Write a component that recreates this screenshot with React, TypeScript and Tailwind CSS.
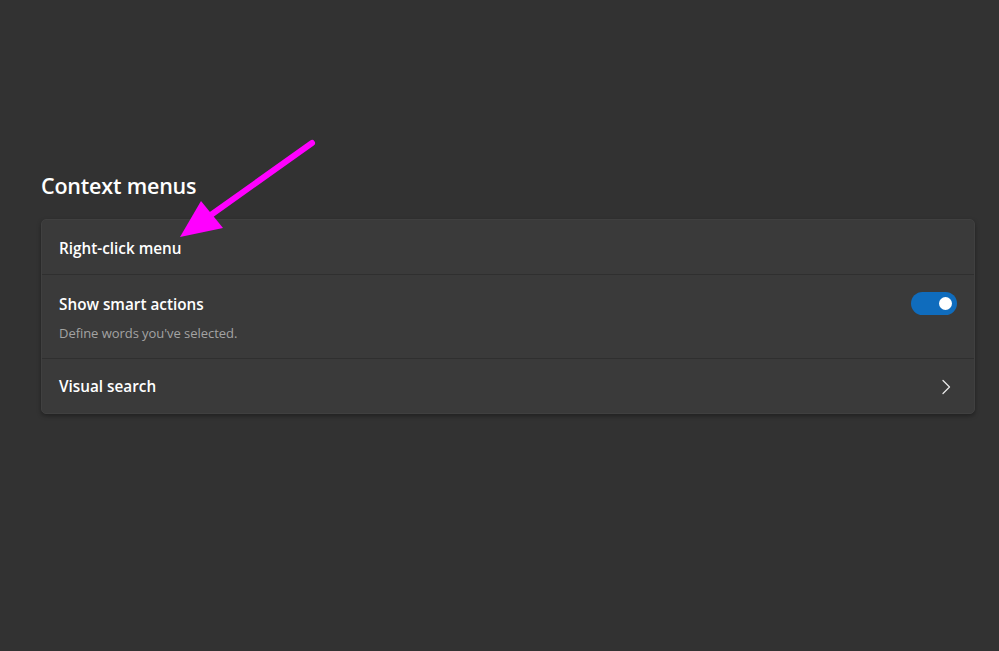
import React from "react";

function Toggle() {
  return (
    <div className="w-[46px] h-[23px] rounded-full bg-[#0f6cbd] flex items-center justify-end pr-[5px]">
      <div className="w-[13px] h-[13px] rounded-full bg-white" />
    </div>
  );
}

function Chevron() {
  return (
    <svg width="10" height="16" viewBox="0 0 10 16" fill="none">
      <path d="M2 1.5 L8.5 8 L2 14.5" stroke="#e6e6e6" strokeWidth="1.3" strokeLinecap="round" strokeLinejoin="round" />
    </svg>
  );
}

function Arrow() {
  return (
    <svg className="absolute left-0 top-0 pointer-events-none" width="999" height="651">
      <line x1="312" y1="143" x2="208" y2="217" stroke="#ff00ff" strokeWidth="6" strokeLinecap="round" />
      <polygon points="180,237 201,201 223,228" fill="#ff00ff" />
    </svg>
  );
}

export default function App() {
  return (
    <div
      className="relative w-[999px] h-[651px] bg-[#323232] text-white overflow-hidden"
      style={{ fontFamily: '"Open Sans", "Noto Sans", sans-serif' }}
    >
      <div className="pl-[41px] pr-[24px] pt-[172px]">
        <h2 className="text-[21.5px] leading-[28px] font-semibold tracking-[-0.2px]">Context menus</h2>
        <div className="mt-[19px] rounded-[5px] bg-[#3a3a3a] border border-[#404040] shadow-[0_2px_4px_rgba(0,0,0,0.35)]">
          <div className="h-[55px] px-[17px] pt-[3px] flex items-center border-b border-[#2f2f2f]">
            <span className="text-[15.3px] font-semibold">Right-click menu</span>
          </div>
          <div className="h-[84px] px-[17px] flex items-center justify-between border-b border-[#2f2f2f]">
            <div className="flex flex-col pt-[2px]">
              <span className="text-[15.3px] leading-[20px] font-semibold">Show smart actions</span>
              <span className="mt-[10px] text-[13px] leading-[18px] text-[#a3a3a3] tracking-[-0.05px]">Define words you've selected.</span>
            </div>
            <div className="-mt-[27px]">
              <Toggle />
            </div>
          </div>
          <div className="h-[54px] px-[17px] pr-[23px] pt-[1px] flex items-center justify-between">
            <span className="text-[15.3px] font-semibold">Visual search</span>
            <Chevron />
          </div>
        </div>
      </div>
      <Arrow />
    </div>
  );
}
